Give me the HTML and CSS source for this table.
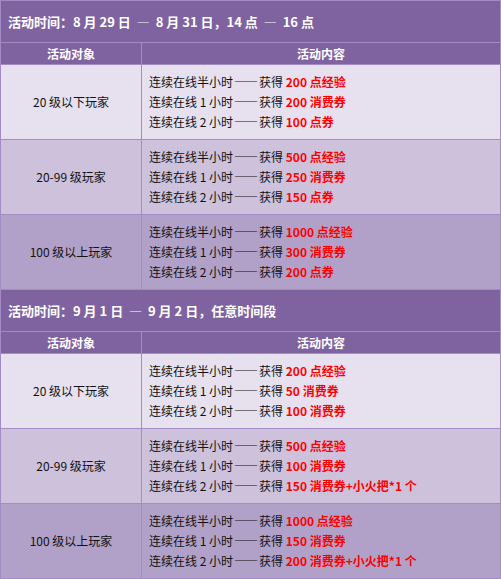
FILE: index.html
```html
<!DOCTYPE html>
<html lang="zh-CN">
<head>
<meta charset="utf-8">
<title>活动</title>
<link rel="stylesheet" href="styles.css">
</head>
<body>
<table class="act">
  <colgroup><col class="c1"><col class="c2"></colgroup>
  <tr><td class="title" colspan="2">活动时间：8 月 29 日 &nbsp;—&nbsp; 8 月 31 日，14 点 &nbsp;—&nbsp; 16 点</td></tr>
  <tr class="head"><th>活动对象</th><th>活动内容</th></tr>
  <tr class="r1">
    <td class="who">20 级以下玩家</td>
    <td class="what">连续在线半小时<span class="dash">——</span>获得 <b>200 点经验</b><br>连续在线 1 小时<span class="dash">——</span>获得 <b>200 消费券</b><br>连续在线 2 小时<span class="dash">——</span>获得 <b>100 点券</b></td>
  </tr>
  <tr class="r2">
    <td class="who">20-99 级玩家</td>
    <td class="what">连续在线半小时<span class="dash">——</span>获得 <b>500 点经验</b><br>连续在线 1 小时<span class="dash">——</span>获得 <b>250 消费券</b><br>连续在线 2 小时<span class="dash">——</span>获得 <b>150 点券</b></td>
  </tr>
  <tr class="r3">
    <td class="who">100 级以上玩家</td>
    <td class="what">连续在线半小时<span class="dash">——</span>获得 <b>1000 点经验</b><br>连续在线 1 小时<span class="dash">——</span>获得 <b>300 消费券</b><br>连续在线 2 小时<span class="dash">——</span>获得 <b>200 点券</b></td>
  </tr>
  <tr><td class="title" colspan="2">活动时间：9 月 1 日 &nbsp;—&nbsp; 9 月 2 日，任意时间段</td></tr>
  <tr class="head"><th>活动对象</th><th>活动内容</th></tr>
  <tr class="r1">
    <td class="who">20 级以下玩家</td>
    <td class="what">连续在线半小时<span class="dash">——</span>获得 <b>200 点经验</b><br>连续在线 1 小时<span class="dash">——</span>获得 <b>50 消费券</b><br>连续在线 2 小时<span class="dash">——</span>获得 <b>100 消费券</b></td>
  </tr>
  <tr class="r2">
    <td class="who">20-99 级玩家</td>
    <td class="what">连续在线半小时<span class="dash">——</span>获得 <b>500 点经验</b><br>连续在线 1 小时<span class="dash">——</span>获得 <b>100 消费券</b><br>连续在线 2 小时<span class="dash">——</span>获得 <b>150 消费券+小火把*1 个</b></td>
  </tr>
  <tr class="r3">
    <td class="who">100 级以上玩家</td>
    <td class="what">连续在线半小时<span class="dash">——</span>获得 <b>1000 点经验</b><br>连续在线 1 小时<span class="dash">——</span>获得 <b>150 消费券</b><br>连续在线 2 小时<span class="dash">——</span>获得 <b>200 消费券+小火把*1 个</b></td>
  </tr>
</table>
</body>
</html>
```
FILE: styles.css
```css
html, body {
  margin: 0;
  padding: 0;
  background: #ffffff;
}
.act {
  width: 501px;
  border-collapse: collapse;
  font-family: "Noto Sans CJK SC", "Liberation Sans", sans-serif;
  font-size: 12px;
  color: #111111;
}
.act td, .act th {
  border: 1px solid #a38bc5;
  padding: 0;
}
.c1 { width: 141px; }
.title {
  background: #7f63a1;
  color: #ffffff;
  font-weight: bold;
  font-size: 13px;
  height: 41px;
  padding-left: 7px !important;
  text-align: left;
  vertical-align: middle;
}
.head th {
  background: #7f63a1;
  color: #ffffff;
  font-weight: bold;
  font-size: 12px;
  height: 21px;
  line-height: 21px;
  text-align: center;
}
.who {
  text-align: center;
  vertical-align: middle;
  line-height: 20px;
}
.what {
  padding: 7px 0 7px 7px !important;
  line-height: 20px;
  text-align: left;
  vertical-align: top;
}
.dash {
  margin: 0 1px;
}
.what b {
  color: #ff0000;
  font-weight: bold;
}
.r1 td { background: #e7e1ef; }
.r2 td { background: #cdc1dc; }
.r3 td { background: #b1a1c8; }
```
